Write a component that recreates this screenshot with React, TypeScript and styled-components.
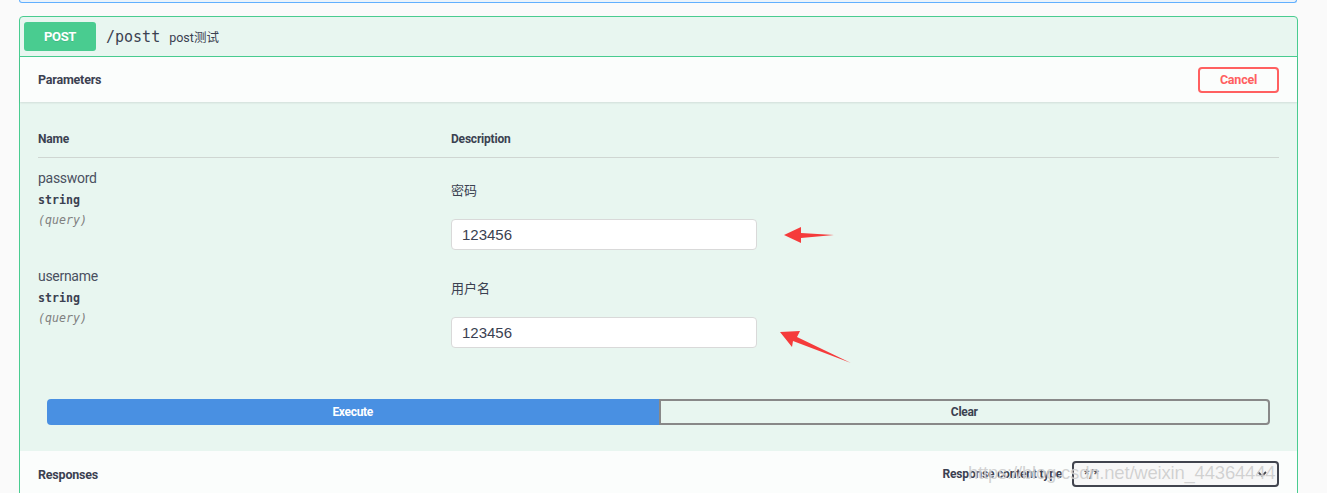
import React from "react";
import styled, { createGlobalStyle } from "styled-components";

const GlobalStyle = createGlobalStyle`
  html, body { margin: 0; padding: 0; background: #fafafa; }
  body { font-family: Roboto, "Noto Sans", "Noto Sans CJK SC", sans-serif; color: #3b4151; }
  * { box-sizing: border-box; }
`;

const Page = styled.div`
  position: relative;
  width: 1327px;
  height: 493px;
  overflow: hidden;
`;

const PrevBlock = styled.div`
  margin-left: 19px;
  width: 1278px;
  height: 3px;
  border: 1px solid #61affe;
  border-top: none;
  border-radius: 0 0 4px 4px;
  background: #ebf3fb;
`;

const OpBlock = styled.div`
  margin: 13px 0 0 19px;
  width: 1279px;
  border: 1px solid #49cc90;
  border-radius: 4px;
  background: #e8f6f0;
`;

const Summary = styled.div`
  display: flex;
  align-items: center;
  height: 40px;
  padding: 0 4px;
  border-bottom: 1px solid #49cc90;
`;

const Method = styled.span`
  display: flex;
  align-items: center;
  justify-content: center;
  width: 72px;
  height: 29px;
  border-radius: 3px;
  background: #49cc90;
  color: #fff;
  font-weight: 700;
  font-size: 13px;
  letter-spacing: -0.3px;
  text-shadow: 0 1px 0 rgba(0, 0, 0, 0.1);
`;

const Path = styled.span`
  padding-left: 10px;
  font-family: "DejaVu Sans Mono", "Liberation Mono", monospace;
  font-size: 15px;
  color: #3b4151;
`;

const Desc = styled.span`
  padding-left: 9px;
  font-size: 12.5px;
  color: #3b4151;
  font-family: Roboto, "Noto Sans CJK SC", sans-serif;
`;

const SectionHeader = styled.div`
  display: flex;
  align-items: center;
  justify-content: space-between;
  height: 45px;
  padding: 0 18px;
  background: rgba(255, 255, 255, 0.8);
  box-shadow: 0 1px 2px rgba(0, 0, 0, 0.1);
`;

const SectionTitle = styled.h4`
  margin: 0;
  font-size: 12.5px;
  font-weight: 700;
  letter-spacing: -0.2px;
  color: #3b4151;
`;

const CancelButton = styled.button`
  width: 81px;
  height: 26px;
  border: 2px solid #ff6060;
  border-radius: 4px;
  background: transparent;
  color: #ff6060;
  font-family: Roboto, sans-serif;
  font-weight: 700;
  font-size: 12.5px;
  letter-spacing: -0.2px;
  padding: 0;
`;

const ParamsBody = styled.div`
  padding: 22px 18px 0;
`;

const TableHead = styled.div`
  display: grid;
  grid-template-columns: 413px 1fr;
  height: 34px;
  padding-top: 7px;
  border-bottom: 1px solid #cfd6d2;
  font-size: 12px;
  font-weight: 700;
  letter-spacing: -0.2px;
  line-height: 16px;
`;

const Row = styled.div`
  display: grid;
  grid-template-columns: 413px 1fr;
  padding: 10px 0 6px;
`;

const NameCell = styled.div`
  display: flex;
  flex-direction: column;
`;

const ParamName = styled.div`
  font-size: 14px;
  line-height: 20px;
  letter-spacing: -0.3px;
  color: #4a5060;
`;

const ParamType = styled.div`
  font-family: "DejaVu Sans Mono", monospace;
  font-size: 11.6px;
  font-weight: 600;
  line-height: 20px;
  margin-top: 2px;
  color: #3b4151;
`;

const ParamIn = styled.div`
  font-family: "DejaVu Sans Mono", monospace;
  font-size: 11.6px;
  font-style: italic;
  line-height: 20px;
  color: #808080;
`;

const DescCell = styled.div`
  display: flex;
  flex-direction: column;
  align-items: flex-start;
`;

const DescText = styled.div`
  margin-top: 12px;
  font-size: 13px;
  line-height: 20px;
  font-family: "Noto Sans CJK SC", sans-serif;
  color: #3b4151;
`;

const Input = styled.input`
  margin-top: 19px;
  width: 306px;
  height: 31px;
  padding: 0 10px;
  border: 1px solid #d9d9d9;
  border-radius: 4px;
  background: #fff;
  font-family: "Liberation Sans", Arial, sans-serif;
  font-size: 15px;
  color: #3b4151;
  outline: none;
`;

const ButtonGroup = styled.div`
  display: grid;
  grid-template-columns: 1fr 1fr;
  margin: 45px 27px 0;
  padding-bottom: 26px;
`;

const ExecuteButton = styled.button`
  height: 26px;
  border: none;
  border-radius: 4px 0 0 4px;
  background: #4990e2;
  color: #fff;
  font-family: Roboto, sans-serif;
  font-weight: 700;
  font-size: 12px;
  letter-spacing: -0.3px;
  padding: 0;
`;

const ClearButton = styled.button`
  height: 26px;
  border: 2px solid #888;
  border-radius: 0 4px 4px 0;
  background: transparent;
  color: #3b4151;
  font-family: Roboto, sans-serif;
  font-weight: 700;
  font-size: 12px;
  letter-spacing: -0.3px;
  padding: 0;
`;

const ResponsesHeader = styled(SectionHeader)`
  box-shadow: none;
  height: 46px;
  align-items: center;
`;

const ContentType = styled.div`
  display: flex;
  align-items: center;
  gap: 10px;
  font-size: 12px;
  font-weight: 700;
  letter-spacing: -0.2px;
`;

const Select = styled.div`
  display: flex;
  align-items: center;
  justify-content: space-between;
  width: 207px;
  height: 26px;
  padding: 0 10px;
  border: 2px solid #41444e;
  border-radius: 4px;
  background: #f7f7f7;
  font-size: 12px;
  font-weight: 700;
`;

const Watermark = styled.div`
  position: absolute;
  left: 968px;
  top: 462px;
  font-family: "Liberation Sans", Arial, sans-serif;
  font-size: 18.5px;
  color: rgba(190, 190, 190, 0.7);
  text-shadow: 0 0 1px rgba(255, 255, 255, 0.8);
  letter-spacing: -0.2px;
  pointer-events: none;
  white-space: nowrap;
`;

const Annotations = styled.svg`
  position: absolute;
  left: 0;
  top: 0;
  pointer-events: none;
`;

const params = [
  { name: "password", desc: "密码", value: "123456" },
  { name: "username", desc: "用户名", value: "123456" },
];

export default function App() {
  return (
    <Page>
      <GlobalStyle />
      <PrevBlock />
      <OpBlock>
        <Summary>
          <Method>POST</Method>
          <Path>/postt</Path>
          <Desc>post测试</Desc>
        </Summary>
        <SectionHeader>
          <SectionTitle>Parameters</SectionTitle>
          <CancelButton>Cancel</CancelButton>
        </SectionHeader>
        <ParamsBody>
          <TableHead>
            <div>Name</div>
            <div>Description</div>
          </TableHead>
          {params.map((p) => (
            <Row key={p.name}>
              <NameCell>
                <ParamName>{p.name}</ParamName>
                <ParamType>string</ParamType>
                <ParamIn>(query)</ParamIn>
              </NameCell>
              <DescCell>
                <DescText>{p.desc}</DescText>
                <Input defaultValue={p.value} />
              </DescCell>
            </Row>
          ))}
        </ParamsBody>
        <ButtonGroup>
          <ExecuteButton>Execute</ExecuteButton>
          <ClearButton>Clear</ClearButton>
        </ButtonGroup>
        <ResponsesHeader>
          <SectionTitle>Responses</SectionTitle>
          <ContentType>
            <span>Response content type</span>
            <Select>
              <span>*/*</span>
              <svg width="10" height="8" viewBox="0 0 10 8">
                <path d="M1 2 L5 6 L9 2" fill="none" stroke="#41444e" strokeWidth="1.8" />
              </svg>
            </Select>
          </ContentType>
        </ResponsesHeader>
      </OpBlock>
      <Annotations width="1327" height="493">
        <polygon points="784,235 801,227 801,233 834,235 801,238 801,243" fill="#f53b3b" />
        <polygon points="780,332 800,331 797,337 851,363 793,341 792,347" fill="#f53b3b" />
      </Annotations>
      <Watermark>https://blog.csdn.net/weixin_44364444</Watermark>
    </Page>
  );
}
